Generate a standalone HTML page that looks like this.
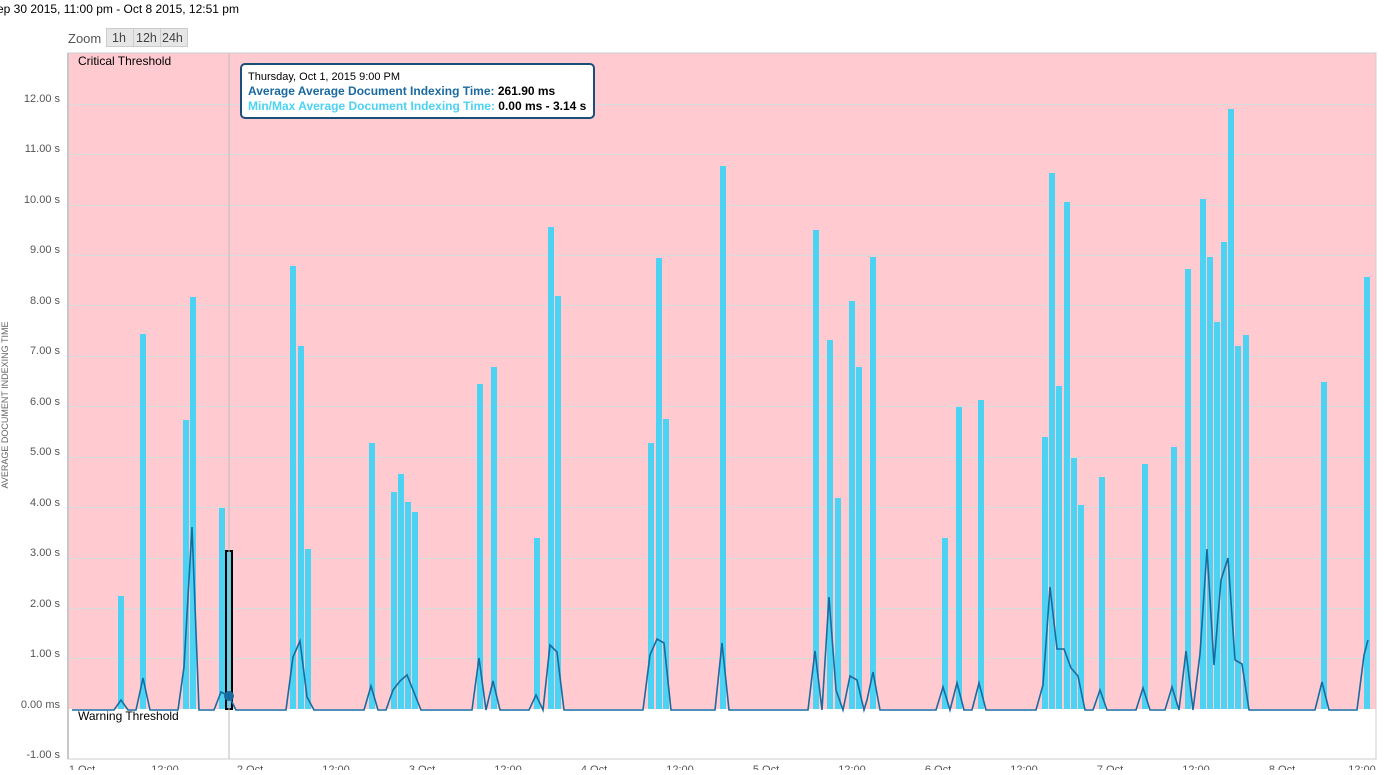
<!DOCTYPE html>
<html><head><meta charset="utf-8"><style>
body{margin:0;background:#fff;width:1387px;height:770px;overflow:hidden;font-family:"Liberation Sans",sans-serif;}
</style></head><body>
<svg width="1387" height="770" xmlns="http://www.w3.org/2000/svg" font-family="Liberation Sans, sans-serif">
<text x="-3" y="13" font-size="12" fill="#000">ep 30 2015, 11:00 pm - Oct 8 2015, 12:51 pm</text>
<text x="68" y="43" font-size="13" fill="#555">Zoom</text>
<g font-size="12.5" fill="#444">
<rect x="106.5" y="28.5" width="27" height="18" fill="#e6e6e6" stroke="#ccc"/><text x="112" y="42">1h</text>
<rect x="133.5" y="28.5" width="27" height="18" fill="#e6e6e6" stroke="#ccc"/><text x="136" y="42">12h</text>
<rect x="160.5" y="28.5" width="27" height="18" fill="#e6e6e6" stroke="#ccc"/><text x="162" y="42">24h</text>
</g>
<rect x="68" y="53" width="1308" height="656" fill="#ffcbd0"/>
<rect x="68" y="709" width="1308" height="50" fill="#fff"/>
<g stroke="#d6dcdc" stroke-width="1">
<line x1="68" x2="1376" y1="104.5" y2="104.5"/><line x1="68" x2="1376" y1="154.5" y2="154.5"/><line x1="68" x2="1376" y1="205.5" y2="205.5"/><line x1="68" x2="1376" y1="255.5" y2="255.5"/><line x1="68" x2="1376" y1="305.5" y2="305.5"/><line x1="68" x2="1376" y1="356.5" y2="356.5"/><line x1="68" x2="1376" y1="406.5" y2="406.5"/><line x1="68" x2="1376" y1="457.5" y2="457.5"/><line x1="68" x2="1376" y1="507.5" y2="507.5"/><line x1="68" x2="1376" y1="558.5" y2="558.5"/><line x1="68" x2="1376" y1="608.5" y2="608.5"/><line x1="68" x2="1376" y1="658.5" y2="658.5"/>
</g>
<g fill="#4cd2f2">
<rect x="118" y="596" width="6" height="113"/><rect x="140" y="334" width="6" height="375"/><rect x="183" y="420" width="6" height="289"/><rect x="190" y="297" width="6" height="412"/><rect x="219" y="508" width="6" height="201"/>
<rect x="290" y="266" width="6" height="443"/><rect x="298" y="346" width="6" height="363"/><rect x="305" y="549" width="6" height="160"/><rect x="369" y="443" width="6" height="266"/><rect x="391" y="492" width="6" height="217"/><rect x="398" y="474" width="6" height="235"/><rect x="405" y="502" width="6" height="207"/><rect x="412" y="512" width="6" height="197"/>
<rect x="477" y="384" width="6" height="325"/><rect x="491" y="367" width="6" height="342"/><rect x="534" y="538" width="6" height="171"/><rect x="548" y="227" width="6" height="482"/><rect x="555" y="296" width="6" height="413"/>
<rect x="648" y="443" width="6" height="266"/><rect x="656" y="258" width="6" height="451"/><rect x="663" y="419" width="6" height="290"/><rect x="720" y="166" width="6" height="543"/>
<rect x="813" y="230" width="6" height="479"/><rect x="827" y="340" width="6" height="369"/><rect x="835" y="498" width="6" height="211"/><rect x="849" y="301" width="6" height="408"/><rect x="856" y="367" width="6" height="342"/><rect x="870" y="257" width="6" height="452"/>
<rect x="942" y="538" width="6" height="171"/><rect x="956" y="407" width="6" height="302"/><rect x="978" y="400" width="6" height="309"/>
<rect x="1042" y="437" width="6" height="272"/><rect x="1049" y="173" width="6" height="536"/><rect x="1056" y="386" width="6" height="323"/><rect x="1064" y="202" width="6" height="507"/><rect x="1071" y="458" width="6" height="251"/><rect x="1078" y="505" width="6" height="204"/><rect x="1099" y="477" width="6" height="232"/>
<rect x="1142" y="464" width="6" height="245"/><rect x="1171" y="447" width="6" height="262"/><rect x="1185" y="269" width="6" height="440"/><rect x="1200" y="199" width="6" height="510"/><rect x="1207" y="257" width="6" height="452"/><rect x="1214" y="322" width="6" height="387"/><rect x="1221" y="242" width="6" height="467"/><rect x="1228" y="109" width="6" height="600"/><rect x="1235" y="346" width="6" height="363"/><rect x="1243" y="335" width="6" height="374"/>
<rect x="1321" y="382" width="6" height="327"/><rect x="1364" y="277" width="6" height="432"/>
</g>
<rect x="226" y="551" width="6" height="158" fill="#4cd2f2" stroke="#000" stroke-width="2"/>
<line x1="229" x2="229" y1="53" y2="759" stroke="#bbb"/>
<polyline fill="none" stroke="#1a6aa0" stroke-width="1.6" points="72,710 114,710 121,700 128,710 136,710 143,678 150,710 178,710 184,667 192,527 199,710 214,710 221,692 229,696 236,710 286,710 293,657 300,641 307,697 314,710 364,710 371,686 378,710 386,710 393,690 400,681 407,675 421,710 472,710 479,658 486,710 493,681 500,710 529,710 536,695 543,710 550,645 557,652 564,710 643,710 650,655 657,639 664,643 671,710 715,710 722,643 729,710 808,710 815,651 822,710 829,597 836,690 843,710 850,676 857,680 864,710 867,700 873,672 880,710 936,710 943,687 950,710 957,683 964,710 972,710 979,683 986,710 1036,710 1043,685 1050,587 1057,649 1064,649 1071,668 1078,676 1085,710 1093,710 1100,690 1107,710 1136,710 1143,688 1150,710 1165,710 1172,687 1179,710 1186,651 1193,710 1200,654 1207,549 1214,665 1221,580 1228,558 1235,660 1242,664 1249,710 1315,710 1322,682 1329,710 1357,710 1364,655 1368,640"/>
<circle cx="229" cy="696" r="5" fill="#1a6aa0"/>
<rect x="68" y="53" width="1308" height="706" fill="none" stroke="#ccc"/>
<line x1="68" x2="68" y1="53" y2="759" stroke="#c8c8c8" stroke-width="2"/>
<text x="78" y="65" font-size="12" fill="#000">Critical Threshold</text>
<text x="78" y="720" font-size="12" fill="#000">Warning Threshold</text>
<g font-size="11" fill="#555" text-anchor="end">
<text x="60" y="102">12.00 s</text><text x="60" y="152">11.00 s</text><text x="60" y="203">10.00 s</text><text x="60" y="253">9.00 s</text><text x="60" y="304">8.00 s</text><text x="60" y="354">7.00 s</text><text x="60" y="405">6.00 s</text><text x="60" y="455">5.00 s</text><text x="60" y="506">4.00 s</text><text x="60" y="556">3.00 s</text><text x="60" y="607">2.00 s</text><text x="60" y="657">1.00 s</text><text x="60" y="708">0.00 ms</text><text x="60" y="758">-1.00 s</text>
</g>
<text transform="translate(8,405) rotate(-90)" font-size="9" fill="#666" text-anchor="middle">AVERAGE DOCUMENT INDEXING TIME</text>
<g font-size="11" fill="#555" text-anchor="middle">
<text x="82" y="773">1 Oct</text><text x="165" y="773">12:00</text><text x="250" y="773">2 Oct</text><text x="336" y="773">12:00</text><text x="422" y="773">3 Oct</text><text x="508" y="773">12:00</text><text x="594" y="773">4 Oct</text><text x="680" y="773">12:00</text><text x="766" y="773">5 Oct</text><text x="852" y="773">12:00</text><text x="938" y="773">6 Oct</text><text x="1024" y="773">12:00</text><text x="1110" y="773">7 Oct</text><text x="1196" y="773">12:00</text><text x="1282" y="773">8 Oct</text><text x="1362" y="773">12:00</text>
</g>
<rect x="241" y="64" width="353" height="54" rx="4" fill="#fff" stroke="#1a4f7a" stroke-width="2"/>
<text x="248" y="80" font-size="11" fill="#000">Thursday, Oct 1, 2015 9:00 PM</text>
<text x="248" y="95" font-size="12" font-weight="bold"><tspan fill="#1a6aa0">Average Average Document Indexing Time:</tspan><tspan fill="#000"> 261.90 ms</tspan></text>
<text x="248" y="110" font-size="12" font-weight="bold"><tspan fill="#4cd2f2">Min/Max Average Document Indexing Time:</tspan><tspan fill="#000"> 0.00 ms - 3.14 s</tspan></text>
</svg>
</body></html>
